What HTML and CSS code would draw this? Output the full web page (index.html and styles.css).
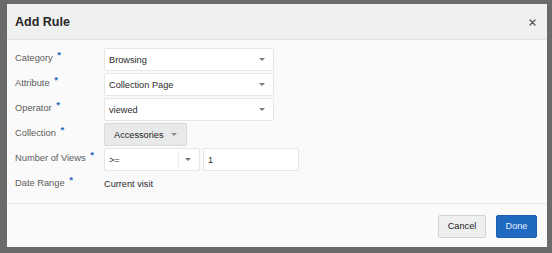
FILE: index.html
```html
<!DOCTYPE html>
<html lang="en">
<head>
    <meta charset="UTF-8">
    <title>Add Rule</title>
    <link rel="stylesheet" href="styles.css">
</head>
<body>
    <div class="dialog">
        <div class="dialog-header">
            <h2>Add Rule</h2>
            <button class="close-btn" aria-label="Close">
                <svg width="7" height="7" viewBox="0 0 7 7"><path d="M1 1 L6 6 M6 1 L1 6" stroke="#5a5a5a" stroke-width="1.4" stroke-linecap="round"/></svg>
            </button>
        </div>

        <div class="dialog-body">
            <div class="form-grid">
                <label>Category <span class="req">*</span></label>
                <div class="select wide"><span>Browsing</span><i class="caret"></i></div>

                <label>Attribute <span class="req">*</span></label>
                <div class="select wide"><span>Collection Page</span><i class="caret"></i></div>

                <label>Operator <span class="req">*</span></label>
                <div class="select wide"><span>viewed</span><i class="caret"></i></div>

                <label>Collection <span class="req">*</span></label>
                <div><button class="menu-btn">Accessories <i class="caret"></i></button></div>

                <label>Number of Views <span class="req">*</span></label>
                <div class="views">
                    <div class="select narrow"><span>&gt;=</span><i class="divider"></i><i class="caret"></i></div>
                    <div class="text-input">1</div>
                </div>

                <label>Date Range <span class="req">*</span></label>
                <div class="value">Current visit</div>
            </div>
        </div>

        <div class="dialog-footer">
            <button class="btn">Cancel</button>
            <button class="btn primary">Done</button>
        </div>
    </div>
</body>
</html>
```

FILE: styles.css
```css
* {
    margin: 0;
    padding: 0;
    box-sizing: border-box;
}

body {
    font-family: "Liberation Sans", Arial, sans-serif;
    background: #6a6a6a;
    width: 552px;
    height: 253px;
    overflow: hidden;
}

.dialog {
    margin: 4px 5px 6px 7px;
    width: 540px;
    height: 243px;
    background: #fafafb;
    display: flex;
    flex-direction: column;
}

.dialog-header {
    height: 36px;
    background: #eff0f0;
    border-bottom: 1px solid #e2e3e3;
    display: flex;
    align-items: center;
    justify-content: space-between;
    padding: 0 9px 0 8px;
}

.dialog-header h2 {
    font-size: 12.5px;
    font-weight: bold;
    color: #262626;
    margin-top: 1px;
}

.close-btn {
    border: none;
    background: none;
    width: 11px;
    height: 11px;
    display: flex;
    align-items: center;
    justify-content: center;
    margin-top: 1px;
}

.dialog-body {
    flex: 1;
    padding: 8px 0 0 8px;
}

.form-grid {
    display: grid;
    grid-template-columns: 89px auto;
    grid-auto-rows: 23px;
    row-gap: 2px;
    align-items: center;
}

.form-grid label {
    font-size: 9.3px;
    line-height: 12px;
    color: #5c5c5c;
    margin-top: -3px;
}

.req {
    color: #1d6bc0;
    font-size: 9.5px;
    font-weight: bold;
    line-height: 0;
    vertical-align: 3px;
    margin-left: 2px;
}

.select {
    height: 23px;
    background: #fff;
    border: 1px solid #e6e6e7;
    border-radius: 2px;
    display: flex;
    align-items: center;
    padding: 0 8px 0 4px;
    font-size: 9.2px;
    color: #2a2a2a;
}

.select span {
    flex: 1;
}

.select.wide {
    width: 170px;
}

.select.narrow {
    width: 96px;
}

.caret {
    width: 0;
    height: 0;
    border-left: 3px solid transparent;
    border-right: 3px solid transparent;
    border-top: 3px solid #787878;
}

.divider {
    width: 1px;
    height: 17px;
    background: #ececec;
    margin-right: 6px;
}

.menu-btn {
    width: 83px;
    height: 23px;
    background: #e8e9e9;
    border: 1px solid #d8d9d9;
    border-radius: 2px;
    font-family: inherit;
    font-size: 9.2px;
    color: #1e1e1e;
    display: flex;
    align-items: center;
    gap: 7px;
    padding-left: 9px;
}

.menu-btn .caret {
    border-top-color: #8a8a8a;
}

.views {
    display: flex;
    gap: 3px;
}

.text-input {
    width: 96px;
    height: 23px;
    background: #fff;
    border: 1px solid #e6e6e7;
    border-radius: 2px;
    font-size: 9.2px;
    color: #2a2a2a;
    display: flex;
    align-items: center;
    padding-left: 4px;
}

.value {
    font-size: 9.2px;
    color: #2a2a2a;
    margin-top: -2px;
}

.dialog-footer {
    height: 44px;
    border-top: 1px solid #e6e7e7;
    display: flex;
    justify-content: flex-end;
    align-items: center;
    gap: 10px;
    padding: 1px 10px 0 0;
}

.btn {
    width: 48px;
    height: 23px;
    border: 1px solid #d2d3d3;
    border-radius: 2px;
    background: #eeefef;
    font-family: inherit;
    font-size: 9.2px;
    color: #222;
}

.btn.primary {
    width: 41px;
    background: #1f69c1;
    border-color: #1a5fb0;
    color: #e4eefa;
}
```
